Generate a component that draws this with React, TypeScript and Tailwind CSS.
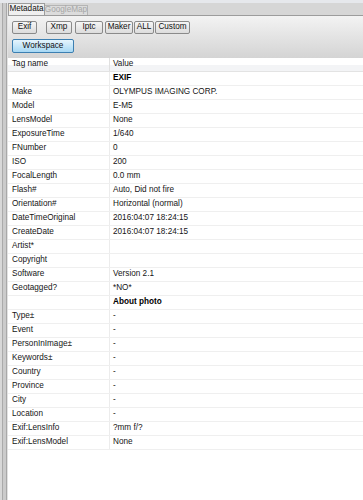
import React from "react";

type Row = { tag: string; value: string; bold?: boolean };

const rows: Row[] = [
  { tag: "", value: "EXIF", bold: true },
  { tag: "Make", value: "OLYMPUS IMAGING CORP." },
  { tag: "Model", value: "E-M5" },
  { tag: "LensModel", value: "None" },
  { tag: "ExposureTime", value: "1/640" },
  { tag: "FNumber", value: "0" },
  { tag: "ISO", value: "200" },
  { tag: "FocalLength", value: "0.0 mm" },
  { tag: "Flash#", value: "Auto, Did not fire" },
  { tag: "Orientation#", value: "Horizontal (normal)" },
  { tag: "DateTimeOriginal", value: "2016:04:07 18:24:15" },
  { tag: "CreateDate", value: "2016:04:07 18:24:15" },
  { tag: "Artist*", value: "" },
  { tag: "Copyright", value: "" },
  { tag: "Software", value: "Version 2.1" },
  { tag: "Geotagged?", value: "*NO*" },
  { tag: "", value: "About photo", bold: true },
  { tag: "Type±", value: "-" },
  { tag: "Event", value: "-" },
  { tag: "PersonInImage±", value: "-" },
  { tag: "Keywords±", value: "-" },
  { tag: "Country", value: "-" },
  { tag: "Province", value: "-" },
  { tag: "City", value: "-" },
  { tag: "Location", value: "-" },
  { tag: "Exif:LensInfo", value: "?mm f/?" },
  { tag: "Exif:LensModel", value: "None" },
];

const btn =
  "h-[13px] flex items-center justify-center border border-[#8a8a8a] rounded-[2px] bg-gradient-to-b from-[#f6f6f6] to-[#dcdcdc] text-[#111]";

export default function App() {
  return (
    <div className="w-[363px] h-[500px] flex flex-col bg-[#d6d6d6] text-[8.2px] leading-none text-[#151515] font-['Liberation_Sans',Arial,sans-serif] overflow-hidden">
      <div className="h-[3px] bg-[#e6e8ec] shrink-0" />
      <div className="flex flex-1 min-h-0">
        {/* splitter */}
        <div className="w-[8px] shrink-0 flex">
          <div className="w-[2px] bg-[#d8d8d8]" />
          <div className="w-[1px] bg-[#aaaaaa]" />
          <div className="w-[3px] bg-[#cbcbcb]" />
          <div className="w-[1px] bg-[#a8a8a8]" />
          <div className="w-[1px] bg-[#e2e2e2]" />
        </div>
        <div className="flex-1 flex flex-col min-w-0">
          {/* tab bar */}
          <div className="h-[12px] flex items-end shrink-0 bg-[#d6d6d6]">
            <div className="h-[12px] w-[37px] flex items-center justify-center border border-b-0 border-[#9c9c9c] bg-[#efefef] text-[#111] whitespace-nowrap">
              Metadata
            </div>
            <div className="h-[10px] w-[43px] flex items-center justify-center border border-l-0 border-b-0 border-[#b4b4b4] bg-[#dcdcdc] text-[#a6a6a6] whitespace-nowrap">
              GoogleMap
            </div>
          </div>
          <div className="h-[1px] bg-[#9c9c9c] shrink-0" />
          {/* toolbar panel */}
          <div className="h-[42px] shrink-0 bg-gradient-to-b from-[#f3f3f3] to-[#d4d4d4] pl-[4px] pt-[5px] flex flex-col gap-[5px]">
            <div className="flex">
              <div className={`${btn} w-[25px]`}>Exif</div>
              <div className={`${btn} w-[26px] ml-[9px]`}>Xmp</div>
              <div className={`${btn} w-[28px] ml-[3px]`}>Iptc</div>
              <div className={`${btn} w-[28px] ml-[2px]`}>Maker</div>
              <div className={`${btn} w-[20px] ml-[1px]`}>ALL</div>
              <div className={`${btn} w-[35px] ml-[1px]`}>Custom</div>
            </div>
            <div className="h-[14px] w-[62px] flex items-center justify-center border border-[#3c7fb1] rounded-[2px] bg-gradient-to-b from-[#e6f5fd] to-[#a6d8f4] text-[#111]">
              Workspace
            </div>
          </div>
          {/* table */}
          <div className="flex-1 bg-white flex flex-col">
            <div className="h-[14px] shrink-0 flex border-b border-[#e3e3e3] bg-gradient-to-b from-white from-50% to-[#f3f4f6] to-50%">
              <div className="w-[102px] shrink-0 pl-[4px] flex items-center border-r border-[#e0e0e0]">
                Tag name
              </div>
              <div className="flex-1 pl-[3px] flex items-center">Value</div>
            </div>
            {rows.map((r, i) => (
              <div key={i} className="h-[14px] shrink-0 flex border-b border-[#efefef]">
                <div className="w-[102px] shrink-0 pl-[4px] flex items-center border-r border-[#ececec]">
                  {r.tag}
                </div>
                <div className={`flex-1 pl-[3px] flex items-center ${r.bold ? "font-bold text-black" : ""}`}>
                  {r.value}
                </div>
              </div>
            ))}
          </div>
        </div>
      </div>
    </div>
  );
}
